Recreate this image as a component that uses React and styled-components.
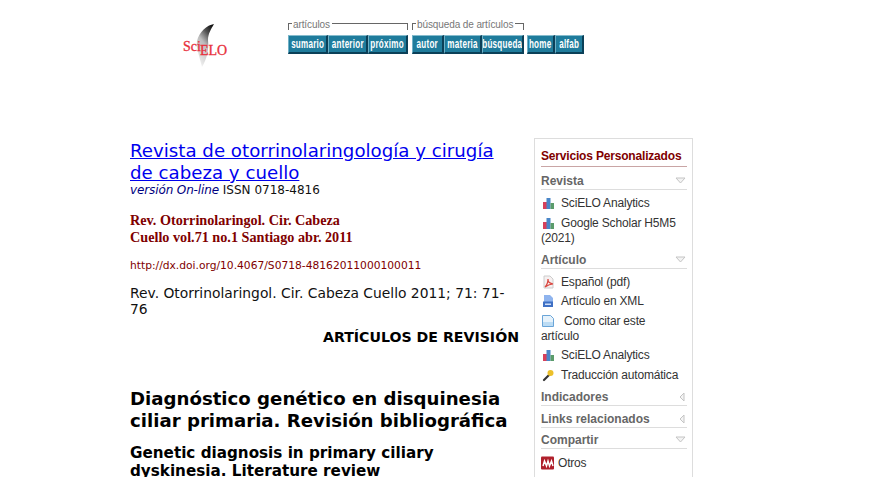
import styled, { createGlobalStyle } from "styled-components";

const Global = createGlobalStyle`
  html, body {
    margin: 0;
    padding: 0;
    height: 477px;
    overflow: hidden;
    background: #fff;
  }
`;

const Page = styled.div`
  width: 873px;
  height: 477px;
  overflow: hidden;
  font-family: "DejaVu Sans", Verdana, sans-serif;
  color: #111;
`;

const Header = styled.div`
  display: flex;
  height: 138px;
  padding-left: 183px;
  box-sizing: border-box;
`;

const Logo = styled.svg`
  width: 46px;
  height: 46px;
  margin-top: 22px;
  flex: none;
`;

const LogoText = styled.text`
  font-family: "Liberation Serif", serif;
  font-size: 14px;
  fill: #e8303c;
  stroke: #e8303c;
  stroke-width: 0.3px;
`;

const Nav = styled.div`
  display: flex;
  margin: 19px 0 0 59px;
`;

const NavGroup = styled.div`
  display: flex;
  flex-direction: column;
  margin-right: ${(p) => p.$gap}px;
`;

const GroupLabel = styled.div`
  display: flex;
  align-items: center;
  height: 11px;
  margin-bottom: 5px;
  font-family: "Liberation Sans", Arial, sans-serif;
  font-size: 10px;
  letter-spacing: -0.1px;
  line-height: 11px;
  color: #777;
  &::before {
    content: "";
    width: 3px;
    height: 6px;
    margin: 3px 1px 0 0;
    border-left: 1px solid #666;
    border-top: 1px solid #666;
  }
  &::after {
    content: "";
    flex: 1;
    height: 6px;
    margin: 3px 0 0 2px;
    border-right: 1px solid #666;
    border-top: 1px solid #666;
  }
`;

const EmptyLabel = styled.div`
  height: 11px;
  margin-bottom: 5px;
`;

const ButtonRow = styled.div`
  display: flex;
`;

const NavButton = styled.div`
  width: ${(p) => p.$w}px;
  height: 19px;
  box-sizing: border-box;
  display: flex;
  justify-content: center;
  background: #1f7c9c;
  border-top: 1px solid #86bccd;
  border-left: 1px solid #6fb0c6;
  border-right: 2px solid #0b4058;
  border-bottom: 2px solid #0b4058;
  color: #fff;
  font-family: "Liberation Sans", Arial, sans-serif;
  font-size: 13px;
  font-weight: 700;
  line-height: 16px;
  white-space: nowrap;
  overflow: hidden;
`;

const ButtonText = styled.span`
  display: inline-block;
  flex: none;
  transform: scaleX(0.62);
  transform-origin: center;
  letter-spacing: 0.4px;
`;

const Content = styled.div`
  display: flex;
  padding-left: 130px;
`;

const Main = styled.div`
  width: 389px;
  flex: none;
`;

const JournalLink = styled.a`
  display: block;
  font-size: 18.2px;
  line-height: 22px;
  padding-top: 2px;
  padding-right: 20px;
  color: #0000ee;
  text-decoration: underline;
`;

const Issn = styled.div`
  font-size: 12px;
  line-height: 14px;
  margin-top: -1px;
  color: #111;
  & em {
    color: #000080;
    letter-spacing: -0.12px;
  }
`;

const Citation = styled.div`
  margin-top: 15px;
  font-family: "Liberation Serif", serif;
  font-size: 14.2px;
  font-weight: 700;
  line-height: 17px;
  color: #800000;
  width: 230px;
`;

const Doi = styled.div`
  margin-top: 13px;
  font-size: 10.7px;
  line-height: 13px;
  color: #800000;
  white-space: nowrap;
`;

const Ref = styled.div`
  margin-top: 13px;
  font-size: 13.85px;
  line-height: 16px;
`;

const Section = styled.div`
  margin-top: 12px;
  font-size: 14.15px;
  line-height: 16px;
  font-weight: 700;
  text-align: right;
  color: #000;
`;

const Heading = styled.h1`
  margin: 43px 0 0;
  font-size: 18.15px;
  line-height: 22px;
  font-weight: 700;
  color: #000;
`;

const SubHeading = styled.h2`
  margin: 12px 0 0;
  font-size: 15.2px;
  line-height: 18px;
  font-weight: 700;
  color: #000;
`;

const Sidebar = styled.div`
  width: 159px;
  height: 400px;
  margin-left: 15px;
  flex: none;
  box-sizing: border-box;
  border: 1px solid #ddd;
  padding: 10px 5px 0 6px;
  font-family: "Liberation Sans", Arial, sans-serif;
  font-size: 12px;
  letter-spacing: -0.18px;
  color: #333;
`;

const SideTitle = styled.div`
  font-weight: 700;
  line-height: 14px;
  padding-bottom: 3px;
  color: #800000;
  border-bottom: 1px solid #c9a5a5;
`;

const SideHead = styled.div`
  display: flex;
  justify-content: space-between;
  align-items: center;
  margin-top: ${(p) => p.$top}px;
  padding-bottom: 1px;
  font-weight: 700;
  line-height: 14px;
  letter-spacing: 0;
  color: #666;
  border-bottom: 1px solid #ddd;
`;

const SideList = styled.div`
  padding-top: ${(p) => p.$top}px;
`;

const SideItem = styled.div`
  line-height: 15px;
  margin-bottom: ${(p) => p.$bottom ?? 5}px;
`;

const Icon = styled.svg`
  width: 14px;
  height: 14px;
  vertical-align: -3px;
  margin-right: ${(p) => p.$gap ?? 6}px;
`;

const BarsIcon = () => (
  <Icon viewBox="0 0 14 14">
    <rect x="2" y="6" width="4" height="7" fill="#d8405a" />
    <rect x="5.500" y="2" width="4" height="11" fill="#4a86c8" />
    <rect x="9.500" y="7" width="3.500" height="6" fill="#5b9c6b" />
  </Icon>
);

const PdfIcon = () => (
  <Icon viewBox="0 0 14 14">
    <path d="M3 1h6l3 3v9H3z" fill="#f6f0f0" stroke="#ccc" />
    <path d="M4 12c2-2 3-5 3-8 0 3 1 4 5 5-3 0-5 1-8 3z" fill="none" stroke="#d9463f" strokeWidth="1.2" />
  </Icon>
);

const XmlIcon = () => (
  <Icon viewBox="0 0 14 14">
    <path d="M3 1h6l3 3v9H3z" fill="#8fb4ee" />
    <rect x="2" y="7.500" width="10" height="5.500" fill="#3f70c4" />
    <rect x="4" y="9.500" width="6" height="1.500" fill="#cfe0fa" />
  </Icon>
);

const CiteIcon = () => (
  <Icon viewBox="0 0 14 14" $gap={9}>
    <path d="M1.500 1.500h8l3 3v8h-11z" fill="#e6f2fb" stroke="#6aa5d8" />
    <rect x="2" y="8" width="10" height="4" fill="#bcdcf4" />
  </Icon>
);

const KeyIcon = () => (
  <Icon viewBox="0 0 14 14">
    <path d="M3 12l5-5" stroke="#333" strokeWidth="2.200" strokeLinecap="round" />
    <circle cx="9.500" cy="5" r="3" fill="#ecc02a" />
  </Icon>
);

const OtrosIcon = () => (
  <Icon viewBox="0 0 14 14" $gap={3}>
    <rect width="13" height="13" y="0.500" rx="1" fill="#b0202c" />
    <path d="M2 10l1.500-5 2 5 1.500-5 1.500 5 2-5 1.500 5" fill="none" stroke="#fff" strokeWidth="1.500" />
  </Icon>
);

const Caret = styled.svg`
  width: 12px;
  height: ${(p) => p.$h}px;
  flex: none;
`;

const DownCaret = () => (
  <Caret $h={8} viewBox="0 0 12 8">
    <path d="M1 1h9L5.500 6z" fill="#f4f4f4" stroke="#c4c4c4" />
  </Caret>
);

const LeftCaret = () => (
  <Caret $h={10} viewBox="0 0 12 10">
    <path d="M9 1v8L5 5z" fill="#f4f4f4" stroke="#c4c4c4" />
  </Caret>
);

const navGroups = [
  {
    label: "artículos",
    gap: 4,
    buttons: [
      ["sumario", 40],
      ["anterior", 40],
      ["próximo", 40],
    ],
  },
  {
    label: "búsqueda de artículos",
    gap: 3,
    buttons: [
      ["autor", 32],
      ["materia", 38],
      ["búsqueda", 42],
    ],
  },
  {
    gap: 0,
    buttons: [
      ["home", 28],
      ["alfab", 29],
    ],
  },
];

export default function App() {
  return (
    <Page>
      <Global />
      <Header>
        <Logo viewBox="0 0 46 46">
          <defs>
            <linearGradient id="swoosh" x1="0.800" y1="0" x2="0.300" y2="1">
              <stop offset="0" stopColor="#111" />
              <stop offset="0.250" stopColor="#555" />
              <stop offset="0.500" stopColor="#bbb" />
              <stop offset="1" stopColor="#f0f0f0" />
            </linearGradient>
          </defs>
          <path d="M31 2C24 3 16 10 14 19c-1 7 3 17 5 26 5-9 7-17 6-27 0-6 3-11 6-16z" fill="url(#swoosh)" />
          <LogoText x="0" y="29">Sci</LogoText>
          <LogoText x="17" y="33">ELO</LogoText>
        </Logo>
        <Nav>
          {navGroups.map((group, i) => (
            <NavGroup key={i} $gap={group.gap}>
              {group.label ? <GroupLabel>{group.label}</GroupLabel> : <EmptyLabel />}
              <ButtonRow>
                {group.buttons.map(([text, w]) => (
                  <NavButton key={text} $w={w}>
                    <ButtonText>{text}</ButtonText>
                  </NavButton>
                ))}
              </ButtonRow>
            </NavGroup>
          ))}
        </Nav>
      </Header>
      <Content>
        <Main>
          <JournalLink href="#">Revista de otorrinolaringología y cirugía de cabeza y cuello</JournalLink>
          <Issn>
            <em>versión On-line</em> ISSN 0718-4816
          </Issn>
          <Citation>Rev. Otorrinolaringol. Cir. Cabeza Cuello vol.71 no.1 Santiago abr. 2011</Citation>
          <Doi>http://dx.doi.org/10.4067/S0718-48162011000100011</Doi>
          <Ref>Rev. Otorrinolaringol. Cir. Cabeza Cuello 2011; 71: 71-76</Ref>
          <Section>ARTÍCULOS DE REVISIÓN</Section>
          <Heading>Diagnóstico genético en disquinesia ciliar primaria. Revisión bibliográfica</Heading>
          <SubHeading>Genetic diagnosis in primary ciliary dyskinesia. Literature review</SubHeading>
        </Main>
        <Sidebar>
          <SideTitle>Servicios Personalizados</SideTitle>
          <SideHead $top={7}>Revista<DownCaret /></SideHead>
          <SideList $top={6}>
            <SideItem><BarsIcon />SciELO Analytics</SideItem>
            <SideItem $bottom={7}><BarsIcon />Google Scholar H5M5 (2021)</SideItem>
          </SideList>
          <SideHead $top={0}>Artículo<DownCaret /></SideHead>
          <SideList $top={6}>
            <SideItem $bottom={4}><PdfIcon />Español (pdf)</SideItem>
            <SideItem><XmlIcon />Artículo en XML</SideItem>
            <SideItem $bottom={4}><CiteIcon />Como citar este<br />artículo</SideItem>
            <SideItem><BarsIcon />SciELO Analytics</SideItem>
            <SideItem $bottom={7}><KeyIcon />Traducción automática</SideItem>
          </SideList>
          <SideHead $top={0}>Indicadores<LeftCaret /></SideHead>
          <SideHead $top={6}>Links relacionados<LeftCaret /></SideHead>
          <SideHead $top={5}>Compartir<DownCaret /></SideHead>
          <SideList $top={7}>
            <SideItem><OtrosIcon />Otros</SideItem>
            <SideItem>Otros</SideItem>
          </SideList>
        </Sidebar>
      </Content>
    </Page>
  );
}
